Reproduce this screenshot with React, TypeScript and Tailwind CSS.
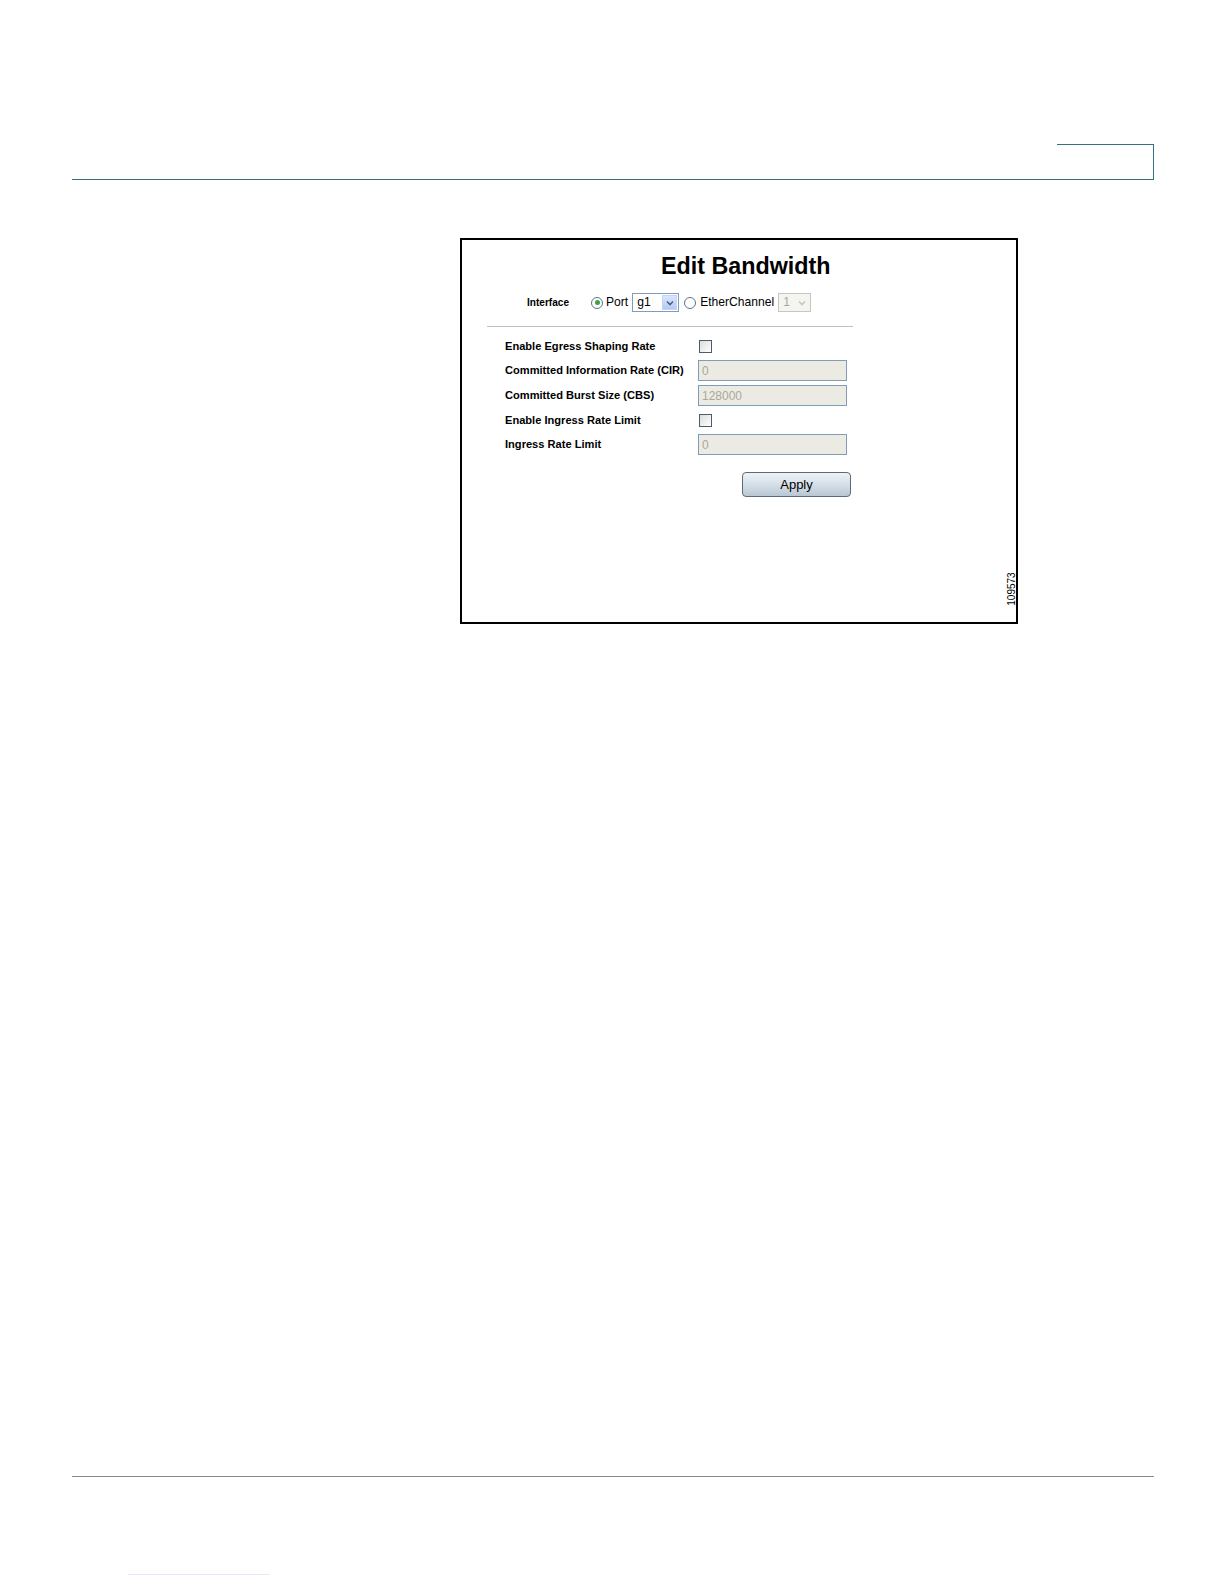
import React from 'react';

const font = { fontFamily: '"Liberation Sans", Arial, sans-serif' };

const Radio = ({ checked }: { checked?: boolean }) => (
  <span className="w-[12px] h-[12px] rounded-full border border-[#5a7491] bg-white flex items-center justify-center shrink-0">
    {checked && <span className="w-[5px] h-[5px] rounded-full bg-[#3aa63a]" />}
  </span>
);

const Arrow = ({ disabled }: { disabled?: boolean }) => (
  <span
    className={`w-[15px] h-[15px] flex items-center justify-center ${
      disabled ? 'bg-[#f4f4f0]' : 'bg-gradient-to-b from-[#dbe6fb] to-[#b5c9f2] border border-[#c3d3fd]'
    }`}
  >
    <svg width="8" height="6" viewBox="0 0 8 6">
      <path d="M1 1.5 L4 4.5 L7 1.5" fill="none" stroke={disabled ? '#c9c7ba' : '#4d6185'} strokeWidth="1.6" />
    </svg>
  </span>
);

const Field = ({ value }: { value: string }) => (
  <div className="w-[149px] h-[21px] border border-[#7f9db9] bg-[#ebebe4] text-[#aca899] text-[12px] pl-[3px] flex items-center">
    {value}
  </div>
);

const Check = () => (
  <div className="w-[13px] h-[13px] border border-[#4c5c70] bg-gradient-to-br from-[#dcdcd7] to-white ml-[1px]" />
);

const Row = ({ label, h, children }: { label: string; h: string; children: React.ReactNode }) => (
  <div className={`flex items-center ${h}`}>
    <div className="w-[193px] text-[11.1px] font-bold text-black">{label}</div>
    {children}
  </div>
);

export default function App() {
  return (
    <div className="w-full h-screen bg-white overflow-hidden" style={font}>
      <div className="h-[144px]" />
      {/* header rule with tab */}
      <div className="ml-[72px] w-[1082px] border-b-[1.5px] border-[#3b6e80] flex justify-end">
        <div className="w-[97px] h-[35px] border-t-[1.5px] border-r-[1.5px] border-[#3b6e80]" />
      </div>

      {/* figure */}
      <div className="mt-[57.5px] ml-[460px] w-[558px] h-[386px] border-2 border-black relative overflow-hidden">
        <div className="flex flex-col">
          <div className="mt-[13px] ml-[199px] text-[23.3px] leading-[26px] font-bold text-black">Edit Bandwidth</div>

          <div className="mt-[15px] ml-[65px] h-[18px] flex items-center text-[12.1px] text-black">
            <span className="text-[10.1px] font-bold w-[64px]">Interface</span>
            <Radio checked />
            <span className="ml-[3px] mr-[4px]">Port</span>
            <div className="w-[47px] h-[19px] border border-[#7f9db9] bg-white flex items-center justify-between pl-[4px] pr-[1px]">
              <span>g1</span>
              <Arrow />
            </div>
            <span className="ml-[5px]"><Radio /></span>
            <span className="ml-[4px] mr-[4px]">EtherChannel</span>
            <div className="w-[33px] h-[19px] border border-[#c9c7ba] bg-[#f4f4f0] flex items-center justify-between pl-[4px] pr-[1px] text-[#aca899]">
              <span>1</span>
              <Arrow disabled />
            </div>
          </div>

          <div className="mt-[14px] ml-[25px] w-[366px] h-px bg-[#c0c0c0]" />

          <div className="mt-[8px] ml-[43px] flex flex-col">
            <Row label="Enable Egress Shaping Rate" h="h-[23.5px]"><Check /></Row>
            <Row label="Committed Information Rate (CIR)" h="h-[25px]"><Field value="0" /></Row>
            <Row label="Committed Burst Size (CBS)" h="h-[25.5px]"><Field value="128000" /></Row>
            <Row label="Enable Ingress Rate Limit" h="h-[24px]"><Check /></Row>
            <Row label="Ingress Rate Limit" h="h-[24.5px]"><Field value="0" /></Row>
          </div>

          <button className="mt-[15px] ml-[280px] w-[109px] h-[25px] rounded-[4px] border border-[#5d6b78] bg-gradient-to-b from-[#eef3f7] via-[#d5dfe8] to-[#b9c7d3] text-[13px] text-black flex items-center justify-center">
            Apply
          </button>
        </div>

        <span className="absolute right-[-12px] bottom-[27.5px] -rotate-90 origin-center text-[10px] leading-[10px] text-black">
          109573
        </span>
      </div>

      {/* footer rule */}
      <div className="mt-[852px] ml-[72px] w-[1082px] h-[1.5px] bg-[#8a8a8a]" />
      <div className="mt-[97px] ml-[128px] w-[142px] h-px bg-[#e3ebfa]" />
    </div>
  );
}
